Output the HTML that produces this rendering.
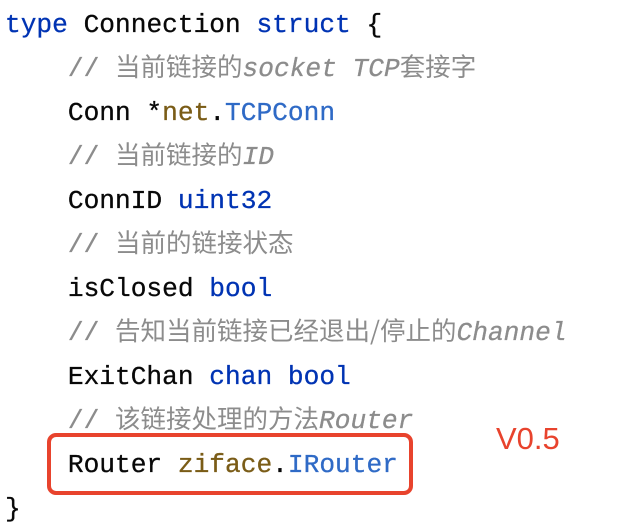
<!DOCTYPE html>
<html><head><meta charset="utf-8"><style>
body{margin:0;width:638px;height:532px;background:#fff;overflow:hidden;position:relative}
.code{position:absolute;left:5px;top:3px;font-family:"Liberation Mono","Noto Sans CJK SC",monospace;font-size:26.2px;color:#080808;white-space:pre;-webkit-text-stroke:0.3px}
.code div{height:44px;line-height:44px;overflow:visible}
.k{color:#0033b3}.c{color:#8c8c8c}.c i{font-style:italic}.p{color:#7a5c17}.t{color:#2f6ac6}
.cj{font-family:"Noto Sans CJK SC",sans-serif;font-size:25.5px;line-height:0;-webkit-text-stroke:0}
.box{position:absolute;left:47px;top:433px;width:358px;height:54px;border:4px solid #e8432d;border-radius:9px}
.v{position:absolute;left:496px;top:421px;font-family:"Liberation Sans",sans-serif;font-size:31px;color:#e8432d}
</style></head><body>
<div class="code"><div><span class="k">type</span> Connection <span class="k">struct</span> {</div><div>    <span class="c">// <span class="cj">当前链接的</span><i>socket TCP</i><span class="cj">套接字</span></span></div><div>    Conn *<span class="p">net</span>.<span class="t">TCPConn</span></div><div>    <span class="c">// <span class="cj">当前链接的</span><i>ID</i></span></div><div>    ConnID <span class="k">uint32</span></div><div>    <span class="c">// <span class="cj">当前的链接状态</span></span></div><div>    isClosed <span class="k">bool</span></div><div>    <span class="c">// <span class="cj">告知当前链接已经退出/停止的</span><i>Channel</i></span></div><div>    ExitChan <span class="k">chan</span> <span class="k">bool</span></div><div>    <span class="c">// <span class="cj">该链接处理的方法</span><i>Router</i></span></div><div>    Router <span class="p">ziface</span>.<span class="t">IRouter</span></div><div>}</div></div>
<div class="box"></div>
<div class="v">V0.5</div>
</body></html>
